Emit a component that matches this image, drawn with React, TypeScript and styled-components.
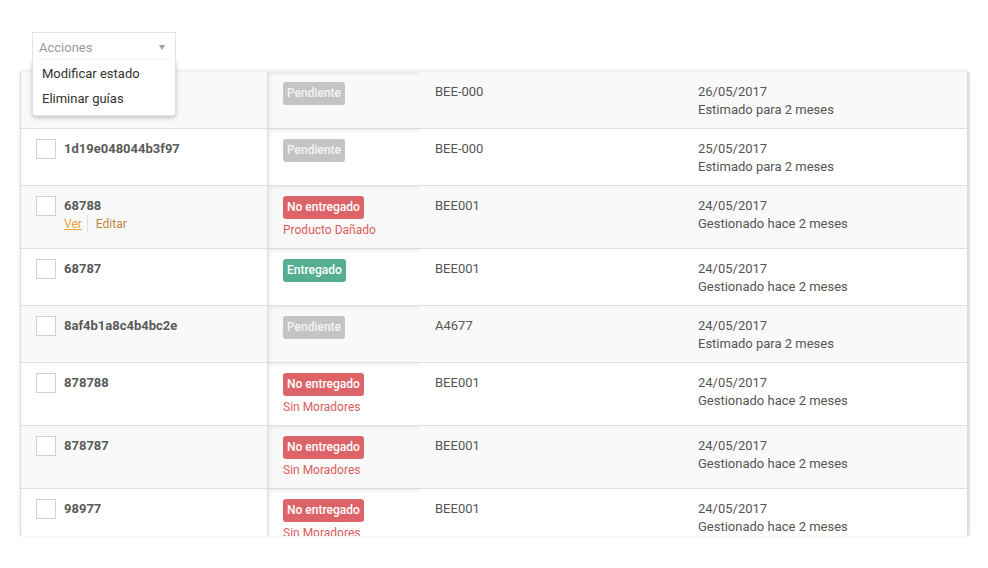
import styled, { createGlobalStyle, css } from "styled-components";

const GlobalStyle = createGlobalStyle`
  body {
    margin: 0;
    background: #ffffff;
    font-family: Roboto, "Liberation Sans", Arial, sans-serif;
    color: #555;
  }
`;

const Page = styled.div`
  width: 988px;
  height: 568px;
  overflow: hidden;
  background: #fff;
`;

const Toolbar = styled.div`
  padding: 32px 0 0 32px;
  height: 72px;
  box-sizing: border-box;
  position: relative;
  z-index: 5;
`;

const Dropdown = styled.div`
  position: relative;
  width: 144px;
`;

const SelectBox = styled.div`
  height: 28px;
  box-sizing: border-box;
  border: 1px solid #e4e4e4;
  border-bottom: none;
  background: #fff;
  display: flex;
  align-items: center;
  justify-content: space-between;
  padding: 1px 10px 0 6px;
  font-size: 13px;
  color: #9a9a9a;
`;

const Caret = styled.span`
  width: 0;
  height: 0;
  border-left: 3px solid transparent;
  border-right: 3px solid transparent;
  border-top: 5px solid #9d9d9d;
`;

const Menu = styled.ul`
  position: absolute;
  top: 100%;
  left: 0;
  right: 0;
  margin: 0;
  padding: 1px 0 4px;
  list-style: none;
  background: #fff;
  border: 1px solid #e4e4e4;
  border-top: none;
  border-radius: 0 0 4px 4px;
  box-shadow: 0 2px 4px rgba(0, 0, 0, 0.22);
`;

const MenuItem = styled.li`
  line-height: 25px;
  padding: 0 9px;
  font-size: 13px;
  color: #333;
`;

const Table = styled.div`
  margin-left: 20px;
  width: 948px;
  height: 464px;
  box-sizing: border-box;
  overflow: hidden;
  border-left: 1px solid #dcdcdc;
  border-right: 1px solid #dcdcdc;
  box-shadow: 0 -1px 4px rgba(0, 0, 0, 0.12), 2px 0 0 #ececec;
`;

const Row = styled.div<{ $striped: boolean }>`
  display: grid;
  grid-template-columns: 247px 152px 263px 1fr;
  border-bottom: 1px solid #dedede;
  background: ${(p) => (p.$striped ? "#f9f9f9" : "#ffffff")};
`;

const Cell = styled.div`
  padding: 11px 15px 9px;
  font-size: 13px;
  line-height: 18px;
  color: #555;
`;

const IdCell = styled(Cell)`
  display: flex;
  align-items: flex-start;
  gap: 8px;
  border-right: 1px solid #dedede;
`;

const StatusCell = styled(Cell)`
  padding: 10px 15px;
  box-shadow: inset 3px 3px 4px -2px rgba(0, 0, 0, 0.1);
`;

const Checkbox = styled.span`
  width: 20px;
  height: 20px;
  margin-top: -1px;
  box-sizing: border-box;
  border: 1px solid #d2d2d2;
  background: #fff;
  flex-shrink: 0;
`;

const GuideId = styled.div`
  font-weight: 700;
  color: #5a5a5a;
`;

const Actions = styled.div`
  display: flex;
  font-size: 12px;
  line-height: 18px;
`;

const ActionLink = styled.span<{ $primary?: boolean }>`
  ${(p) =>
    p.$primary
      ? css`
          color: #e9a23b;
          text-decoration: underline;
          padding-right: 5px;
          border-right: 1px solid #e2e2e2;
        `
      : css`
          color: #b9873f;
          padding-left: 8px;
        `}
`;

const badgeColors = {
  pending: "#c4c4c4",
  failed: "#dc6469",
  delivered: "#55ae8f",
};

type Status = keyof typeof badgeColors;

const Badge = styled.span<{ $status: Status }>`
  display: inline-block;
  height: 23px;
  line-height: 23px;
  padding: 0 4px;
  border-radius: 3px;
  font-size: 12px;
  font-weight: 500;
  color: ${(p) => (p.$status === "pending" ? "#f4f4f4" : "#ffffff")};
  background: ${(p) => badgeColors[p.$status]};
`;

const Reason = styled.div`
  font-size: 12px;
  line-height: 18px;
  margin-top: 2px;
  margin-bottom: -1px;
  color: #d9605d;
`;

const statusLabel: Record<Status, string> = {
  pending: "Pendiente",
  failed: "No entregado",
  delivered: "Entregado",
};

type Guide = {
  id: string;
  status: Status;
  reason?: string;
  code: string;
  date: string;
  note: string;
  links?: boolean;
};

const guides: Guide[] = [
  { id: "68790", status: "pending", code: "BEE-000", date: "26/05/2017", note: "Estimado para 2 meses" },
  { id: "1d19e048044b3f97", status: "pending", code: "BEE-000", date: "25/05/2017", note: "Estimado para 2 meses" },
  { id: "68788", status: "failed", reason: "Producto Dañado", code: "BEE001", date: "24/05/2017", note: "Gestionado hace 2 meses", links: true },
  { id: "68787", status: "delivered", code: "BEE001", date: "24/05/2017", note: "Gestionado hace 2 meses" },
  { id: "8af4b1a8c4b4bc2e", status: "pending", code: "A4677", date: "24/05/2017", note: "Estimado para 2 meses" },
  { id: "878788", status: "failed", reason: "Sin Moradores", code: "BEE001", date: "24/05/2017", note: "Gestionado hace 2 meses" },
  { id: "878787", status: "failed", reason: "Sin Moradores", code: "BEE001", date: "24/05/2017", note: "Gestionado hace 2 meses" },
  { id: "98977", status: "failed", reason: "Sin Moradores", code: "BEE001", date: "24/05/2017", note: "Gestionado hace 2 meses" },
];

const App = () => {
  return (
    <Page>
      <GlobalStyle />
      <Toolbar>
        <Dropdown>
          <SelectBox>
            Acciones
            <Caret />
          </SelectBox>
          <Menu>
            <MenuItem>Modificar estado</MenuItem>
            <MenuItem>Eliminar guías</MenuItem>
          </Menu>
        </Dropdown>
      </Toolbar>
      <Table>
        {guides.map((g, index) => (
          <Row key={index} $striped={index % 2 === 0}>
            <IdCell>
              <Checkbox />
              <div>
                <GuideId>{g.id}</GuideId>
                {g.links && (
                  <Actions>
                    <ActionLink $primary>Ver</ActionLink>
                    <ActionLink>Editar</ActionLink>
                  </Actions>
                )}
              </div>
            </IdCell>
            <StatusCell>
              <Badge $status={g.status}>{statusLabel[g.status]}</Badge>
              {g.reason && <Reason>{g.reason}</Reason>}
            </StatusCell>
            <Cell>{g.code}</Cell>
            <Cell>
              <div>{g.date}</div>
              <div>{g.note}</div>
            </Cell>
          </Row>
        ))}
      </Table>
    </Page>
  );
};

export default App;
